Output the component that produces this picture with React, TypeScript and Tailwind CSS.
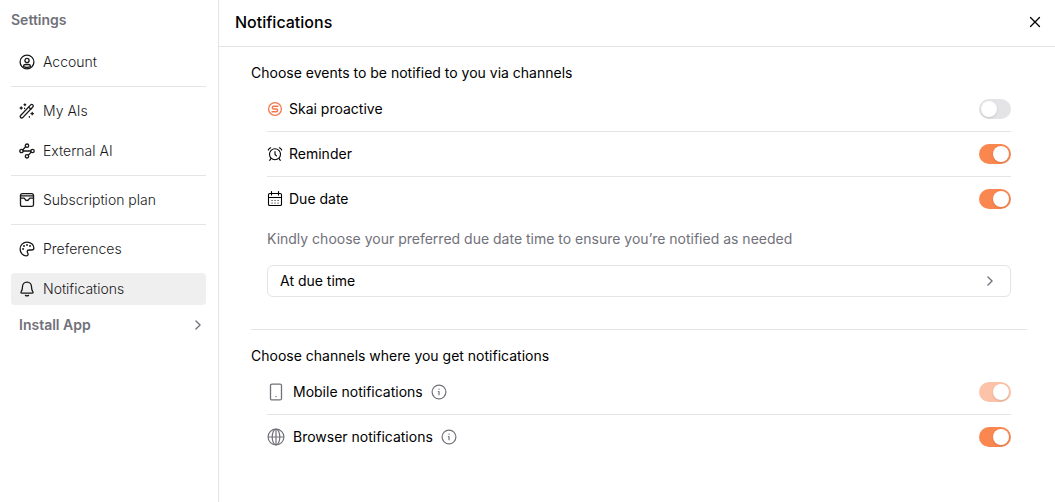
import { useState, type ReactNode } from "react";

function Icon({ children, className = "size-4", width = 1.3 }: { children: ReactNode; className?: string; width?: number }) {
  return (
    <svg
      viewBox="0 0 16 16"
      className={`${className} shrink-0`}
      fill="none"
      stroke="currentColor"
      strokeWidth={width}
      strokeLinecap="round"
      strokeLinejoin="round"
      aria-hidden="true"
    >
      {children}
    </svg>
  );
}

const AccountIcon = () => (
  <Icon>
    <circle cx="8" cy="8" r="6.9" />
    <circle cx="8" cy="6.500" r="2.1" />
    <path d="M4.300 12.300c.3-1.300 1.200-1.800 2.400-1.800h2.600c1.200 0 2.100.5 2.400 1.800-1 .8-2.300 1.200-3.700 1.200s-2.700-.4-3.700-1.200z" />
  </Icon>
);

const WandIcon = () => (
  <Icon>
    <path d="M1.600 12.500 11.700 1.900c.6-.6 1.500-.6 2.100 0s.6 1.500 0 2.100L3.700 14.600c-.6.500-1.500.500-2.100 0s-.6-1.500 0-2.100z" />
    <path d="m9.700 4.100 2.100 2.100" />
    <path d="M5.900.9v1.600M5.100 1.700h1.600M2.200 4v2M1.200 5h2M13.200 9.400v2.400M12 10.600h2.400M10.400 13.600v.6M5.600 5.200v.4" />
  </Icon>
);

const NodesIcon = () => (
  <Icon>
    <circle cx="8" cy="2.700" r="1.700" />
    <circle cx="2.500" cy="8" r="1.700" />
    <circle cx="13.500" cy="8" r="1.700" />
    <circle cx="8" cy="13.300" r="1.700" />
    <path d="M6.700 3.800 3.800 6.800M4.200 8h7.600M12.200 9.200l-2.900 2.900" />
  </Icon>
);

const PlanIcon = () => (
  <Icon>
    <path d="M1.500 3.500c0-1.100.7-1.900 1.800-1.900h9.400c1.100 0 1.800.8 1.800 1.900v9.200c0 1.100-.7 1.700-1.800 1.700H3.300c-1.100 0-1.800-.6-1.800-1.700z" />
    <path d="M1.500 3.900h13M1.500 6.200h3.400c.5 0 .8.300 1 .8.400 1 1.100 1.500 2.100 1.500s1.700-.5 2.100-1.500c.2-.5.5-.8 1-.8h3.400" />
  </Icon>
);

const PaletteIcon = () => (
  <Icon>
    <path d="M8 1.100C4.100 1.100 1.100 4.100 1.100 8s2.900 6.900 6.200 6.900c1.200 0 1.800-.8 1.800-1.700 0-1.300-.9-1.500-.9-2.600s.8-1.600 1.900-1.600h2.500c1.500 0 2.300-.7 2.300-2.100C14.900 3.600 11.700 1.100 8 1.100z" />
    <circle cx="4.100" cy="8" r=".35" fill="currentColor" />
    <circle cx="5" cy="5" r=".35" fill="currentColor" />
    <circle cx="8" cy="3.900" r=".35" fill="currentColor" />
    <circle cx="11" cy="5.100" r=".35" fill="currentColor" />
  </Icon>
);

const BellIcon = () => (
  <Icon>
    <path d="M8 1.200c-2.700 0-4.500 2-4.500 4.500 0 2.800-.6 4.100-1.400 5.300-.4.600-.1 1.200.6 1.200h10.600c.7 0 1-.6.6-1.200-.8-1.200-1.400-2.500-1.400-5.300 0-2.500-1.800-4.500-4.500-4.500zM6.500 14.400c.8.500 2.200.5 3 0" />
  </Icon>
);

const SkaiIcon = () => (
  <Icon className="size-4 text-[#f5784c]" width={1.3}>
    <circle cx="8" cy="8" r="6.400" />
    <path d="M10.900 5.300H6.700a1.350 1.350 0 0 0 0 2.700h2.600a1.350 1.350 0 0 1 0 2.700H5.100" strokeWidth="1.500" />
  </Icon>
);

const AlarmIcon = () => (
  <Icon width={1.1}>
    <circle cx="8" cy="8.300" r="5.500" />
    <path d="M8 5.500v3l1.500 1.300M1.300 4.100q.7-1.500 2.300-2.300M14.700 4.100q-.7-1.500-2.300-2.300M3.900 12.700l-1.200 1.600M12.100 12.700l1.200 1.600" />
  </Icon>
);

const CalendarIcon = () => (
  <Icon width={1.1}>
    <rect x="1.500" y="2.500" width="13" height="12" rx="1.300" />
    <path d="M1.500 6.500h13M4.500 .6v3.400M11.500 .6v3.400" />
    <path d="M5 9.500h.1M8 9.500h.1M11 9.500h.1M5 12h.1M8 12h.1M11 12h.1" />
  </Icon>
);

const PhoneIcon = () => (
  <svg viewBox="0 0 18 18" className="size-[18px] shrink-0 text-[#71717a]" fill="none" stroke="currentColor" strokeWidth="1.300" strokeLinecap="round" aria-hidden="true">
    <rect x="3.500" y="1.100" width="11" height="15.800" rx="1.500" />
    <path d="M9 13.500h.1" />
  </svg>
);

const GlobeIcon = () => (
  <svg viewBox="0 0 18 18" className="size-[18px] shrink-0 text-[#71717a]" fill="none" stroke="currentColor" strokeWidth="1.200" aria-hidden="true">
    <circle cx="9" cy="9" r="7.900" />
    <ellipse cx="9" cy="9" rx="3.800" ry="7.900" />
    <path d="M1.100 9h15.800M9 1.100v15.800" />
  </svg>
);

const InfoIcon = () => (
  <Icon className="size-4 text-[#71717a]" width={1.2}>
    <circle cx="8" cy="8" r="6.900" />
    <path d="M8 7.500v3.200M7.300 7.500H8M8 5.200h.1" />
  </Icon>
);

const ChevronIcon = ({ className }: { className: string }) => (
  <Icon className={className}>
    <path d="m5.900 4 4.200 4-4.200 4" />
  </Icon>
);

const navGroups: { label: string; icon: () => ReactNode; active?: boolean }[][] = [
  [{ label: "Account", icon: AccountIcon }],
  [
    { label: "My AIs", icon: WandIcon },
    { label: "External AI", icon: NodesIcon },
  ],
  [{ label: "Subscription plan", icon: PlanIcon }],
  [
    { label: "Preferences", icon: PaletteIcon },
    { label: "Notifications", icon: BellIcon, active: true },
  ],
];

function Sidebar() {
  return (
    <aside className="w-[219px] shrink-0 border-r border-[#e4e4e7] px-[11px] pt-2.5">
      <h2 className="text-sm font-semibold text-[#71717a]">Settings</h2>
      <nav aria-label="Settings" className="mt-4 pr-px">
        <div className="divide-y divide-[#e4e4e7]">
          {navGroups.map((group, i) => (
            <ul key={i} className="flex flex-col gap-2 py-2 first:pt-0 last:pb-1">
              {group.map(({ label, icon: ItemIcon, active }) => (
                <li key={label}>
                  <a
                    href="#"
                    aria-current={active ? "page" : undefined}
                    className={`flex h-8 items-center gap-2 rounded px-2 text-sm font-light text-[#18181b] ${active ? "bg-[#efefef]" : ""}`}
                  >
                    <ItemIcon />
                    {label}
                  </a>
                </li>
              ))}
            </ul>
          ))}
        </div>
        <button type="button" className="flex h-8 w-full items-center justify-between pl-2 text-sm font-semibold text-[#71717a]">
          Install App
          <ChevronIcon className="size-4" />
        </button>
      </nav>
    </aside>
  );
}

interface ToggleRowProps {
  id: string;
  label: string;
  icon: ReactNode;
  initial: boolean;
  disabled?: boolean;
  info?: boolean;
}

function ToggleRow({ id, label, icon, initial, disabled, info }: ToggleRowProps) {
  const [on, setOn] = useState(initial);
  return (
    <li className="flex h-[45px] items-center justify-between border-b border-[#e4e4e7] last:h-11 last:border-b-0">
      <div className={`flex items-center text-sm ${info ? "gap-2" : "gap-1.5"}`}>
        {icon}
        <label htmlFor={id}>{label}</label>
        {info && (
          <button type="button" aria-label={`About ${label.toLowerCase()}`}>
            <InfoIcon />
          </button>
        )}
      </div>
      <input
        id={id}
        type="checkbox"
        role="switch"
        checked={on}
        disabled={disabled}
        onChange={() => setOn(!on)}
        className="flex h-5 w-8 shrink-0 appearance-none items-center rounded-full bg-[#e4e4e7] px-0.5 before:size-4 before:rounded-full before:bg-white before:shadow-sm checked:justify-end checked:bg-[#fa874f] disabled:bg-[#fdc3a9]"
      />
    </li>
  );
}

export default function App() {
  return (
    <div className="flex min-h-screen bg-white font-['Inter',sans-serif] text-black">
      <Sidebar />
      <main className="min-w-0 flex-1">
        <header className="flex h-[47px] items-center justify-between border-b border-[#e4e4e7] pr-3 pb-0.5 pl-4">
          <h1 className="text-base font-medium">Notifications</h1>
          <button type="button" aria-label="Close">
            <Icon>
              <path d="m3.500 3.500 9 9M12.500 3.500l-9 9" />
            </Icon>
          </button>
        </header>
        <div className="pt-4 pr-7 pb-10 pl-8">
          <section className="border-b border-[#e4e4e7] pb-8">
            <h2 className="text-sm">Choose events to be notified to you via channels</h2>
            <div className="mt-1 px-4">
              <ul>
                <ToggleRow id="skai" label="Skai proactive" icon={<SkaiIcon />} initial={false} />
                <ToggleRow id="reminder" label="Reminder" icon={<AlarmIcon />} initial />
                <ToggleRow id="due" label="Due date" icon={<CalendarIcon />} initial />
              </ul>
              <p className="mt-2 text-sm text-[#71717a]">
                Kindly choose your preferred due date time to ensure you’re notified as needed
              </p>
              <button
                type="button"
                aria-haspopup="menu"
                className="mt-4 flex h-8 w-full items-center justify-between rounded-md border border-[#e4e4e7] px-3 text-sm"
              >
                At due time
                <ChevronIcon className="size-4 text-[#71717a]" />
              </button>
            </div>
          </section>
          <section className="pt-4">
            <h2 className="text-sm">Choose channels where you get notifications</h2>
            <ul className="mt-1 px-4">
              <ToggleRow id="mobile" label="Mobile notifications" icon={<PhoneIcon />} initial disabled info />
              <ToggleRow id="browser" label="Browser notifications" icon={<GlobeIcon />} initial info />
            </ul>
          </section>
        </div>
      </main>
    </div>
  );
}
